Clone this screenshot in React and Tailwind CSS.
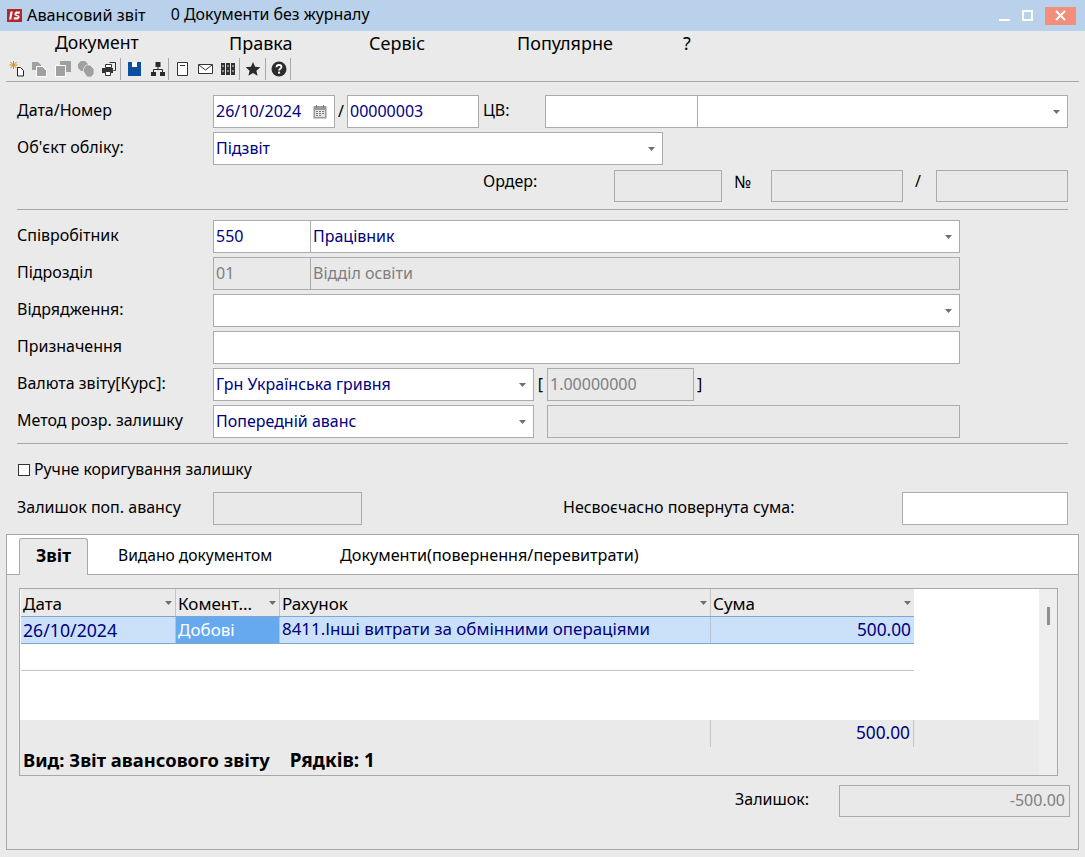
import { Fragment } from 'react'

const navy = 'text-[#000080]'

const Caret = ({ className = '' }) => (
  <svg width="7" height="4" viewBox="0 0 7 4" className={`shrink-0 ${className}`}>
    <path d="M0 0h7L3.500 4z" fill="#6f6f6f" />
  </svg>
)

function Box({ w, value, disabled, caret, right, h = 'h-[33px]', className = '', children }) {
  return (
    <div
      style={{ width: w }}
      className={`${h} shrink-0 border border-[#ababab] flex items-center px-[2px] pb-[2px] whitespace-nowrap ${
        disabled ? 'bg-[#e9e9e9] text-[#7f7f7f]' : `bg-white ${navy}`
      } ${className}`}
    >
      <span className={`flex-1 min-w-0 ${right ? 'text-right pr-[2px]' : ''}`}>{value}</span>
      {children}
      {caret && <Caret className="mr-[5px] mt-[2px]" />}
    </div>
  )
}

const Label = ({ w = 196, children, className = 'pb-[4px]' }) => (
  <span style={{ width: w }} className={`shrink-0 text-black whitespace-nowrap ${className}`}>{children}</span>
)

const Row = ({ children, className = '' }) => (
  <div className={`flex items-center h-[33px] pl-[17px] shrink-0 ${className}`}>{children}</div>
)

const Calendar = () => (
  <svg width="14" height="14" viewBox="0 0 14 14" className="mr-[5px] mt-[2px]">
    <rect x="0.5" y="1" width="13" height="12.500" fill="#9a9a9a" />
    <rect x="2" y="5" width="10" height="7" fill="#e4e4e4" />
    <path d="M3 6h2v1H3zM6 6h2v1H6zM9 6h2v1H9zM3 8h2v1H3zM6 8h2v1H6zM9 8h2v1H9zM3 10h2v1H3zM6 10h2v1H6z" fill="#7c7c7c" />
    <path d="M3 0h1v3H3zM10 0h1v3h-1z" fill="#7c7c7c" />
  </svg>
)

const Sep = ({ className }) => <span className={`w-px h-[22px] bg-[#a8a8a8] shrink-0 ${className}`} />

const toolbar = [
  <svg key="new" width="16" height="16" viewBox="0 0 16 16">
    <path d="M8.500 6.500h3l3 3v5.500h-6z" fill="#fff" stroke="#222" />
    <path d="M4.500 0v8M.5 4h8M1.500 1l6 6M7.500 1l-6 6" stroke="#d9881a" />
  </svg>,
  <svg key="copy" width="16" height="16" viewBox="0 0 16 16">
    <path d="M0 1h6l3 3v5H0z" fill="#a0a0a0" />
    <path d="M4.500 5.500h6l4 4v6h-10z" fill="#a0a0a0" stroke="#fff" />
  </svg>,
  <svg key="pages" width="16" height="16" viewBox="0 0 16 16">
    <path d="M5 0h11v11H5z" fill="#a0a0a0" />
    <path d="M.5 4.500h10v11H.5z" fill="#a0a0a0" stroke="#fff" />
  </svg>,
  <svg key="gears" width="16" height="16" viewBox="0 0 16 16">
    <path d="M0 3l3-3h4l3 3v3l-2 4H3L0 7z" fill="#a0a0a0" />
    <path d="M6 7l2-3h4l4 4v5l-2 2v1H9l-2-3-2-3z" fill="#a0a0a0" stroke="#fff" strokeWidth="0.600" />
  </svg>,
  <svg key="print" width="16" height="16" viewBox="0 0 16 16">
    <path d="M8.500 1.500h6v8h-2" fill="none" stroke="#333" />
    <path d="M4.500 3.500h6v3h-6z" fill="#fff" stroke="#333" />
    <path d="M1 7h11v5H1z" fill="#333" />
    <path d="M4.500 10.500h5v4h-5z" fill="#fff" stroke="#333" />
  </svg>,
  <Sep key="s1" className="-ml-[4px] -mr-[2px]" />,
  <svg key="save" width="16" height="16" viewBox="0 0 16 16">
    <path d="M2 1h13v14H2z" fill="#0b4f9e" />
    <path d="M6 1h5v5H6z" fill="#fff" />
  </svg>,
  <svg key="tree" width="16" height="16" viewBox="0 0 16 16" className="ml-px">
    <path d="M5.500 1h5v5h-5zM1 11h5v4H1zM10 11h5v4h-5z" fill="#2b2b2b" />
    <path d="M8 6v3M3.500 11V8.500h9V11" stroke="#2b2b2b" fill="none" />
  </svg>,
  <Sep key="s2" className="-ml-[5px] -mr-px" />,
  <svg key="note" width="16" height="16" viewBox="0 0 16 16">
    <path d="M2.500 1.500h10v13h-10z" fill="#fff" stroke="#333" />
    <path d="M5 4.500h5" stroke="#333" />
  </svg>,
  <svg key="mail" width="16" height="16" viewBox="0 0 16 16">
    <path d="M.5 3.500h14v9H.5z" fill="#fff" stroke="#333" />
    <path d="M1 4l6.500 5L14 4" fill="none" stroke="#333" />
  </svg>,
  <svg key="books" width="16" height="16" viewBox="0 0 16 16">
    <path d="M0 2h4v12H0zM5 2h4v12H5zM10 2h4v12h-4z" fill="#333" />
    <path d="M1 5h2M6 5h2M11 5h2M1 10h2M6 10h2M11 10h2" stroke="#ddd" />
  </svg>,
  <Sep key="s3" className="-ml-[5px] -mr-[2px]" />,
  <svg key="star" width="16" height="16" viewBox="0 0 16 16">
    <path d="M8 1l2.100 4.800 5.200.5-3.900 3.400 1.200 5.100L8 12.100l-4.600 2.700 1.200-5.100L.7 6.300l5.200-.5z" fill="#2b2b2b" />
  </svg>,
  <Sep key="s4" className="-ml-[3px] -mr-[2px]" />,
  <svg key="help" width="16" height="16" viewBox="0 0 16 16">
    <circle cx="8" cy="8" r="7.500" fill="#2b2b2b" />
    <path d="M5.500 6.200C5.600 4.600 6.700 4 8 4c1.500 0 2.500.8 2.500 2 0 1.800-2.400 1.800-2.400 3.500" fill="none" stroke="#fff" strokeWidth="1.800" />
    <rect x="7.100" y="10.600" width="2" height="2" fill="#fff" />
  </svg>,
  <Sep key="s5" className="-ml-[4px]" />,
]

const cols = [
  { name: 'Дата', w: 155 },
  { name: 'Комент...', w: 104 },
  { name: 'Рахунок', w: 431 },
  { name: 'Сума', w: 203 },
]

export default function App() {
  return (
    <div
      className="w-[1085px] h-[857px] bg-[#eaeaea] text-[16px] leading-none overflow-hidden flex flex-col"
      style={{ fontFamily: '"Noto Sans", sans-serif' }}
    >
      {/* title bar */}
      <div className="h-[31px] bg-[#b9d1ea] flex items-center pl-[7px] text-black shrink-0">
        <svg width="15" height="13" viewBox="0 0 15 13" className="mr-[5px]">
          <rect width="15" height="13" fill="#b3262c" />
          <path d="M3.500 2.500h2.200L4.300 10.500H2.100zM13 2.500H9L7.500 4v2.300l3 1-.1.9H7L6.600 10.500h4.200L12.400 9V6.700l-3-1 .1-1H12.600z" fill="#fff" />
        </svg>
        <span className="pb-[1px] text-[16.300px]">Авансовий звіт</span>
        <span className="ml-[25px] pb-[1px] text-[15.900px]">0 Документи без журналу</span>
        <div className="ml-auto flex items-center">
          <span className="w-[11px] h-[2px] bg-white mt-[9px] mr-[12px]" />
          <span className="w-[11px] h-[11px] border-2 border-white mr-[12px]" />
          <span className="w-[31px] h-[18px] bg-[#f38e7a] flex items-center justify-center mr-[9px]">
            <svg width="11" height="11" viewBox="0 0 11 11">
              <path d="M1 1l9 9M10 1l-9 9" stroke="#fff" strokeWidth="2" />
            </svg>
          </span>
        </div>
      </div>

      {/* menu */}
      <div className="h-[26px] flex items-center shrink-0 text-black text-[18px] pb-[2px]">
        <span className="ml-[55px] w-[174px] text-[17.600px]">Документ</span>
        <span className="w-[140px]">Правка</span>
        <span className="w-[148px]">Сервіс</span>
        <span className="w-[166px]">Популярне</span>
        <span>?</span>
      </div>

      {/* toolbar */}
      <div className="h-[25px] mx-[6px] pl-[3px] pb-[1px] flex items-center gap-[7px] border-b border-[#a8a8a8] shrink-0">
        {toolbar.map((ic, i) => <Fragment key={i}>{ic}</Fragment>)}
      </div>

      {/* form */}
      <Row className="mt-[13px]">
        <Label>Дата/Номер</Label>
        <Box w={122} value="26/10/2024"><Calendar /></Box>
        <span className="w-[12px] text-center text-black pb-[2px]">/</span>
        <Box w={132} value="00000003" />
        <Label w={62} className="ml-[4px] pb-[4px]">ЦВ:</Label>
        <Box w={153} />
        <Box w={370} caret className="border-l-0" />
      </Row>
      <Row className="mt-[4px]">
        <Label>Об'єкт обліку:</Label>
        <Box w={450} value="Підзвіт" caret />
      </Row>
      <Row className="mt-[4px]">
        <Label w={466} />
        <Label w={131} className="pb-[9px]">Ордер:</Label>
        <Box w={108} h="h-[32px]" disabled />
        <span className="w-[49px] pl-[12px] pb-[9px] text-black text-[17px]">№</span>
        <Box w={132} h="h-[32px]" disabled />
        <span className="w-[33px] pl-[12px] pb-[9px] text-black">/</span>
        <Box w={132} h="h-[32px]" disabled />
      </Row>
      <div className="h-px bg-[#a8a8a8] mx-[17px] mt-[7px] shrink-0" />

      <Row className="mt-[10px]">
        <Label>Співробітник</Label>
        <Box w={98} value="550" />
        <Box w={649} value="Працівник" caret className="border-l-0" />
      </Row>
      <Row className="mt-[4px]">
        <Label>Підрозділ</Label>
        <Box w={98} value="01" disabled />
        <Box w={649} value="Відділ освіти" disabled className="border-l-0" />
      </Row>
      <Row className="mt-[4px]">
        <Label>Відрядження:</Label>
        <Box w={747} caret />
      </Row>
      <Row className="mt-[4px]">
        <Label>Призначення</Label>
        <Box w={747} />
      </Row>
      <Row className="mt-[4px]">
        <Label>Валюта звіту[Курс]:</Label>
        <Box w={321} value="Грн Українська гривня" caret />
        <span className="w-[13px] text-center text-black pb-[2px]">[</span>
        <Box w={147} value="1.00000000" disabled />
        <span className="ml-[3px] text-black pb-[2px]">]</span>
      </Row>
      <Row className="mt-[4px]">
        <Label>Метод розр. залишку</Label>
        <Box w={321} value="Попередній аванс" caret />
        <Box w={413} disabled className="ml-[13px]" />
      </Row>
      <div className="h-px bg-[#a8a8a8] mx-[17px] mt-[5px] shrink-0" />

      <div className="flex items-center h-[16px] mt-[18px] pl-[18px] shrink-0 text-black text-[15.800px]">
        <span className="w-[12px] h-[12px] border border-[#333] bg-white mr-[4px]" />
        <span className="pb-[1px]">Ручне коригування залишку</span>
      </div>
      <Row className="mt-[14px]">
        <Label>Залишок поп. авансу</Label>
        <Box w={149} disabled />
        <Label w={339} className="ml-[201px] pb-[4px]">Несвоєчасно повернута сума:</Label>
        <Box w={166} />
      </Row>

      {/* tabs */}
      <div className="mt-[9px] mx-[6px] h-[316px] border border-[#a8a8a8] flex flex-col shrink-0">
        <div className="h-[40px] bg-white border-b border-[#a8a8a8] flex items-end pl-[12px] shrink-0 text-black">
          <div className="w-[69px] h-[37px] -mb-px bg-[#eaeaea] border border-b-0 border-[#a8a8a8] rounded-t-[3px] flex items-center justify-center font-bold text-[17.500px] pb-[2px]">
            Звіт
          </div>
          <span className="w-[252px] h-[36px] pl-[30px] pb-[1px] flex items-center text-[15.600px]">Видано документом</span>
          <span className="h-[36px] pb-[1px] flex items-center text-[16.200px]">Документи(повернення/перевитрати)</span>
        </div>

        {/* grid */}
        <div className="mt-[13px] ml-[12px] w-[1039px] h-[188px] border border-[#a8a8a8] bg-white flex shrink-0 text-[17px]">
          <div className="flex-1 flex flex-col min-w-0">
            <div className="flex h-[28px] bg-[#eaeaea] ml-px w-[893px] border-b border-[#7ea6d0] shrink-0">
              {cols.map((c) => (
                <div
                  key={c.name}
                  style={{ width: c.w }}
                  className="h-full flex items-center pl-[2px] pt-[1px] border-r border-[#c4c4c4] last:border-r-0 text-black"
                >
                  <span className="flex-1 whitespace-nowrap">{c.name}</span>
                  <Caret className="mr-[3px]" />
                </div>
              ))}
            </div>
            <div className={`flex h-[27px] ml-px w-[893px] bg-[#cbe1fa] border-b border-[#7ea6d0] shrink-0 ${navy}`}>
              <div className="w-[155px] pl-[2px] pt-[1px] flex items-center border-r border-[#b5c4d4] text-[17.700px]">26/10/2024</div>
              <div className="w-[104px] pl-[2px] pb-[1px] flex items-center bg-[#66a9ef] text-white border-r border-[#b5c4d4]">Добові</div>
              <div className="w-[431px] pl-[2px] pb-[1px] flex items-center border-r border-[#b5c4d4] whitespace-nowrap text-[16.900px]">8411.Інші витрати за обмінними операціями</div>
              <div className="w-[203px] pr-[3px] flex items-center justify-end text-[17.300px]">500.00</div>
            </div>
            <div className="h-[27px] ml-px w-[893px] border-b border-[#c4c4c4] shrink-0" />
            <div className="flex-1" />
            <div className="h-[55px] bg-[#eaeaea] shrink-0 flex flex-col">
              <div className="h-[27px] flex">
                <div className="w-[691px] border-r border-[#c4c4c4]" />
                <div className={`w-[203px] pr-[3px] pb-[1px] flex items-center justify-end border-r border-[#c4c4c4] text-[17.300px] ${navy}`}>500.00</div>
              </div>
              <div className="flex-1 flex items-center pl-[3px] pb-[1px] font-bold text-black text-[18.400px] whitespace-nowrap">
                <span>Вид: Звіт авансового звіту</span>
                <span className="ml-[20px] text-[19px]">Рядків: 1</span>
              </div>
            </div>
          </div>
          <div className="w-[18px] bg-[#eeeeee] shrink-0 flex justify-center">
            <span className="w-[3px] h-[18px] mt-[18px] bg-[#8f8f8f]" />
          </div>
        </div>

        <div className="flex items-center justify-end mt-[9px] pr-[8px]">
          <Label w={104}>Залишок:</Label>
          <Box w={231} h="h-[32px]" value="-500.00" disabled right />
        </div>
      </div>
    </div>
  )
}
